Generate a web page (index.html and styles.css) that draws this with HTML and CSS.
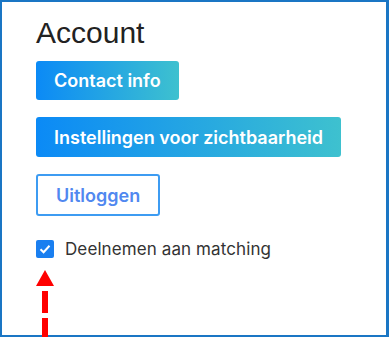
FILE: index.html
```html
<!DOCTYPE html>
<html lang="nl">
<head>
    <meta charset="UTF-8">
    <meta name="viewport" content="width=device-width, initial-scale=1.0">
    <title>Account</title>
    <link rel="stylesheet" href="styles.css">
</head>
<body>

    <div class="frame">
        <h2>Account</h2>

        <!-- Account actions -->
        <div class="actions">
            <button class="grad-btn">Contact info</button>
            <button class="grad-btn">Instellingen voor zichtbaarheid</button>
            <button class="outline-btn">Uitloggen</button>
        </div>

        <label class="check-row">
            <span class="check-box">
                <svg width="14" height="14" viewBox="0 0 14 14">
                    <path d="M2.5 7.2 L5.6 10.2 L11.5 3.8" fill="none" stroke="#fff" stroke-width="2"/>
                </svg>
            </span>
            Deelnemen aan matching
        </label>

        <!-- Annotation arrow -->
        <div class="arrow">
            <svg width="20" height="67" viewBox="0 0 20 67">
                <polygon points="9,0 18,16 0,16" fill="#ff0000"/>
                <rect x="6" y="21" width="6" height="22" fill="#ff0000"/>
                <rect x="6" y="48" width="6" height="19" fill="#ff0000"/>
            </svg>
        </div>
    </div>

</body>
</html>
```

FILE: styles.css
```css
* {
    margin: 0;
    padding: 0;
    box-sizing: border-box;
}

body {
    font-family: 'Inter', 'Liberation Sans', sans-serif;
    background-color: #fff;
    width: 389px;
    height: 337px;
    overflow: hidden;
}

.frame {
    width: 389px;
    height: 337px;
    border: 2px solid #1a76c4;
    border-right-width: 3px;
    padding: 14px 0 0 34px;
    display: flex;
    flex-direction: column;
    align-items: flex-start;
}

h2 {
    font-family: 'Liberation Sans', Arial, sans-serif;
    font-weight: 400;
    font-size: 30px;
    line-height: 34px;
    color: #222;
}

.actions {
    display: flex;
    flex-direction: column;
    align-items: flex-start;
    gap: 17px;
    margin-top: 11px;
}

.grad-btn {
    font-family: 'Inter', sans-serif;
    font-weight: 600;
    font-size: 18px;
    color: #fff;
    height: 39px;
    padding: 0 18px;
    border: none;
    border-radius: 3px;
    background: linear-gradient(90deg, #0b8af6 0%, #3ec1cf 100%);
}

.grad-btn + .grad-btn {
    height: 40px;
}

.outline-btn {
    font-family: 'Inter', sans-serif;
    font-weight: 600;
    font-size: 18px;
    color: #5088f0;
    height: 42px;
    padding: 0 18px;
    background-color: #fff;
    border: 2px solid #3d9cf2;
    border-radius: 3px;
}

.check-row {
    display: flex;
    align-items: center;
    gap: 11px;
    margin-top: 24px;
    font-size: 17px;
    letter-spacing: 0.1px;
    color: #333;
    line-height: 18px;
}

.check-box {
    width: 18px;
    height: 18px;
    border-radius: 2px;
    background-color: #1a7ff0;
    display: flex;
    align-items: center;
    justify-content: center;
}

.arrow {
    margin-top: 12px;
    line-height: 0;
}
```
